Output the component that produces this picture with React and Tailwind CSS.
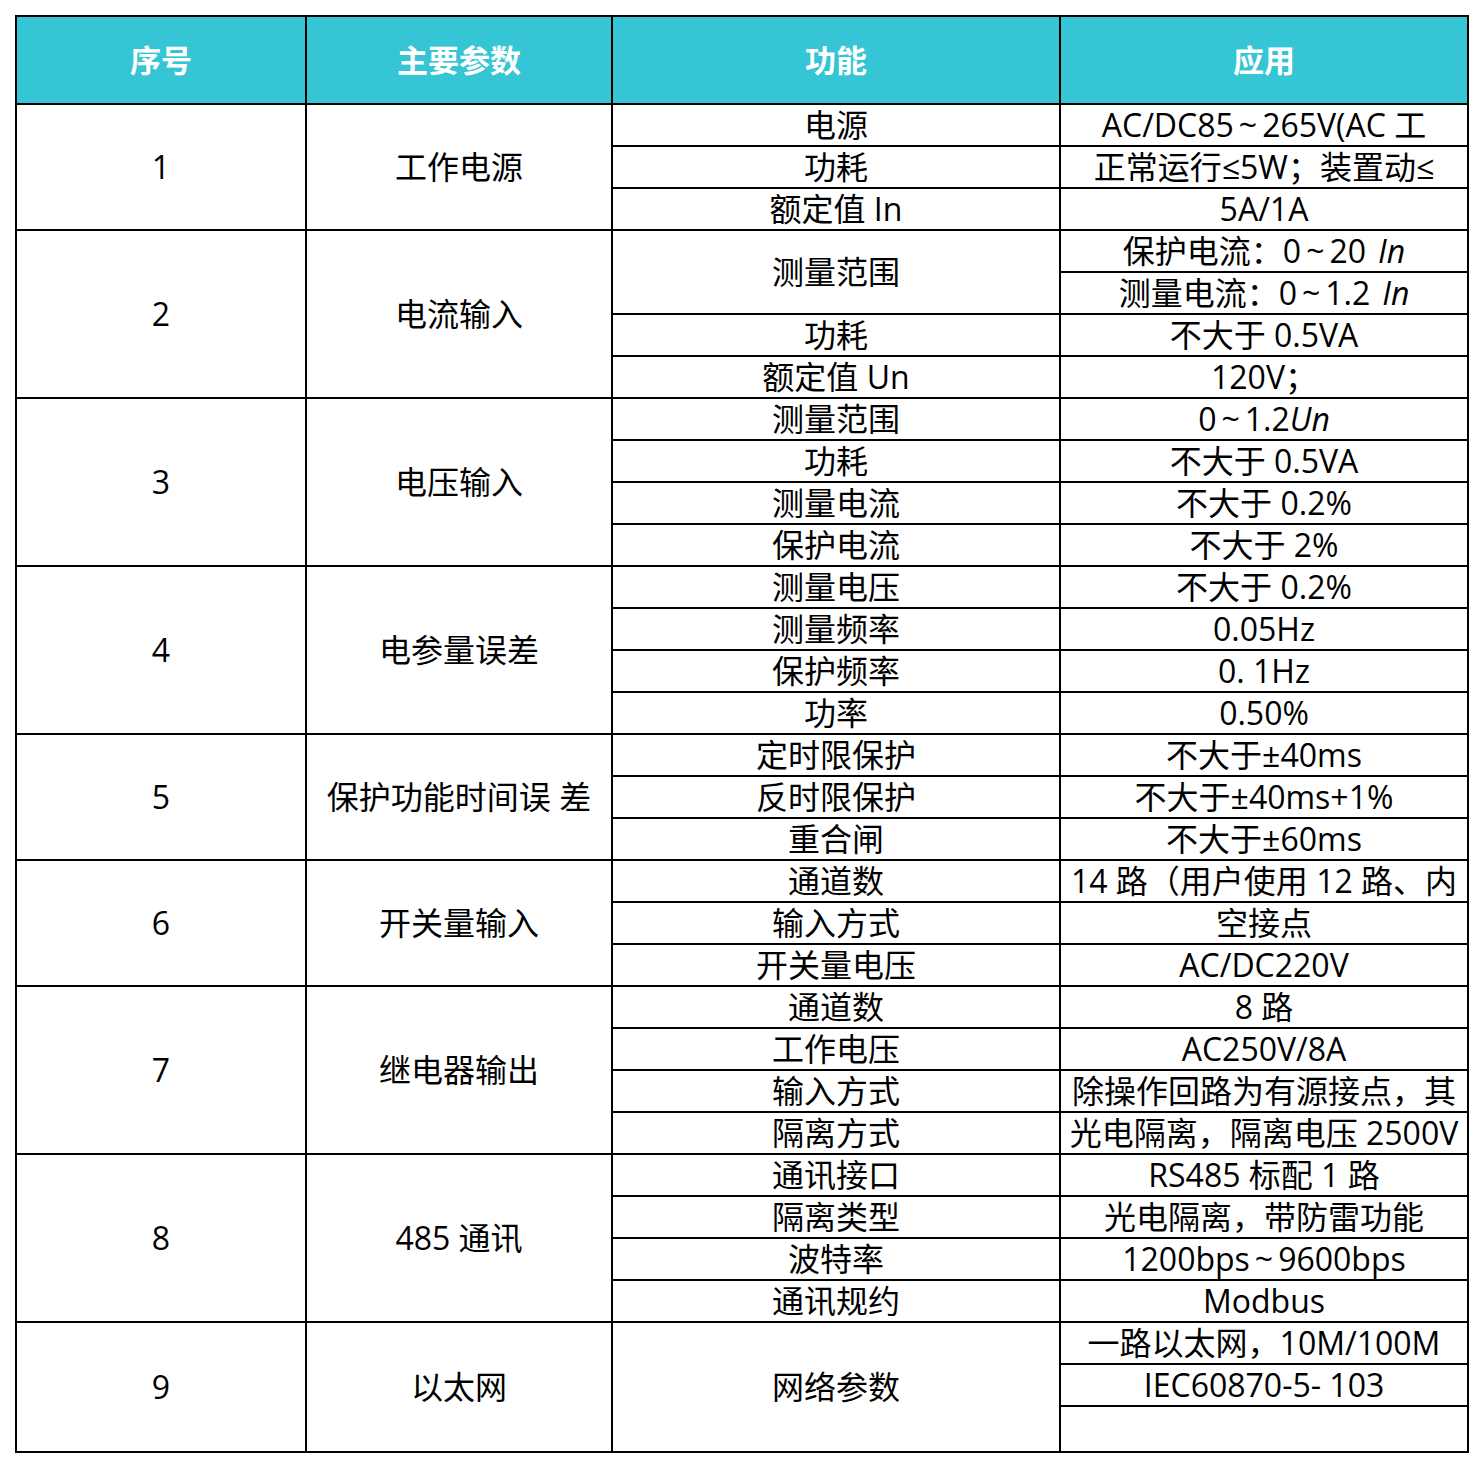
import React from "react";

const W = ["w-[288px]", "w-[304px]", "w-[446px]", "w-[406px]"];

const T = () => <span className="mx-[5px] font-['Open_Sans',sans-serif]">~</span>;

const groups = [
  {
    n: "1",
    name: "工作电源",
    funcs: [["电源", "h-[40px]"], ["功耗", "h-[40px]"], ["额定值 In", "h-[40px]"]],
    apps: [
      [<>AC/DC85<T />265V(AC 工</>, "h-[40px]"],
      ["正常运行≤5W；装置动≤", "h-[40px]"],
      ["5A/1A", "h-[40px]"],
    ],
  },
  {
    n: "2",
    name: "电流输入",
    funcs: [["测量范围", "h-[82px]"], ["功耗", "h-[40px]"], ["额定值 Un", "h-[40px]"]],
    apps: [
      [<>保护电流：0<T />20<i className="ml-[12px]">In</i></>, "h-[40px]"],
      [<>测量电流：0<T />1.2<i className="ml-[12px]">In</i></>, "h-[40px]"],
      ["不大于 0.5VA", "h-[40px]"],
      ["120V；", "h-[40px]"],
    ],
  },
  {
    n: "3",
    name: "电压输入",
    funcs: [["测量范围", "h-[40px]"], ["功耗", "h-[40px]"], ["测量电流", "h-[40px]"], ["保护电流", "h-[40px]"]],
    apps: [
      [<>0<T />1.2<i>Un</i></>, "h-[40px]"],
      ["不大于 0.5VA", "h-[40px]"],
      ["不大于 0.2%", "h-[40px]"],
      ["不大于 2%", "h-[40px]"],
    ],
  },
  {
    n: "4",
    name: "电参量误差",
    funcs: [["测量电压", "h-[40px]"], ["测量频率", "h-[40px]"], ["保护频率", "h-[40px]"], ["功率", "h-[40px]"]],
    apps: [["不大于 0.2%", "h-[40px]"], ["0.05Hz", "h-[40px]"], ["0. 1Hz", "h-[40px]"], ["0.50%", "h-[40px]"]],
  },
  {
    n: "5",
    name: "保护功能时间误 差",
    funcs: [["定时限保护", "h-[40px]"], ["反时限保护", "h-[40px]"], ["重合闸", "h-[40px]"]],
    apps: [["不大于±40ms", "h-[40px]"], ["不大于±40ms+1%", "h-[40px]"], ["不大于±60ms", "h-[40px]"]],
  },
  {
    n: "6",
    name: "开关量输入",
    funcs: [["通道数", "h-[40px]"], ["输入方式", "h-[40px]"], ["开关量电压", "h-[40px]"]],
    apps: [["14 路（用户使用 12 路、内", "h-[40px]"], ["空接点", "h-[40px]"], ["AC/DC220V", "h-[40px]"]],
  },
  {
    n: "7",
    name: "继电器输出",
    funcs: [["通道数", "h-[40px]"], ["工作电压", "h-[40px]"], ["输入方式", "h-[40px]"], ["隔离方式", "h-[40px]"]],
    apps: [
      ["8 路", "h-[40px]"],
      ["AC250V/8A", "h-[40px]"],
      ["除操作回路为有源接点，其", "h-[40px]"],
      ["光电隔离，隔离电压 2500V", "h-[40px]"],
    ],
  },
  {
    n: "8",
    name: "485 通讯",
    funcs: [["通讯接口", "h-[40px]"], ["隔离类型", "h-[40px]"], ["波特率", "h-[40px]"], ["通讯规约", "h-[40px]"]],
    apps: [
      ["RS485 标配 1 路", "h-[40px]"],
      ["光电隔离，带防雷功能", "h-[40px]"],
      [<>1200bps<T />9600bps</>, "h-[40px]"],
      ["Modbus", "h-[40px]"],
    ],
  },
  {
    n: "9",
    name: "以太网",
    funcs: [["网络参数", "h-[128px]"]],
    apps: [["一路以太网，10M/100M", "h-[40px]"], ["IEC60870-5- 103", "h-[40px]"], ["", "h-[44px]"]],
  },
];

function Cell({ className = "", children }) {
  return (
    <div
      className={
        "flex items-center justify-center bg-white text-black text-[32px] leading-[38px] whitespace-nowrap " +
        className
      }
    >
      {children}
    </div>
  );
}

export default function App() {
  return (
    <div className="w-[1484px] h-[1468px] bg-white pt-[15px] pl-[15px] font-['Open_Sans','Noto_Sans_CJK_SC',sans-serif]">
      <div className="w-[1454px] bg-black p-[2px] flex flex-col gap-[2px]">
        <div className="flex gap-[2px] h-[86px]">
          {["序号", "主要参数", "功能", "应用"].map((t, i) => (
            <div
              key={t}
              className={
                "flex items-center justify-center bg-[#36c5d5] text-white font-bold text-[31px] leading-[40px] " + W[i]
              }
            >
              {t}
            </div>
          ))}
        </div>
        {groups.map((g) => (
          <div key={g.n} className="flex gap-[2px]">
            <Cell className={W[0]}>{g.n}</Cell>
            <Cell className={W[1]}>{g.name}</Cell>
            <div className={"flex flex-col gap-[2px] " + W[2]}>
              {g.funcs.map(([t, h], i) => (
                <Cell key={i} className={h}>
                  {t}
                </Cell>
              ))}
            </div>
            <div className={"flex flex-col gap-[2px] " + W[3]}>
              {g.apps.map(([t, h], i) => (
                <Cell key={i} className={h}>
                  {t}
                </Cell>
              ))}
            </div>
          </div>
        ))}
      </div>
    </div>
  );
}
